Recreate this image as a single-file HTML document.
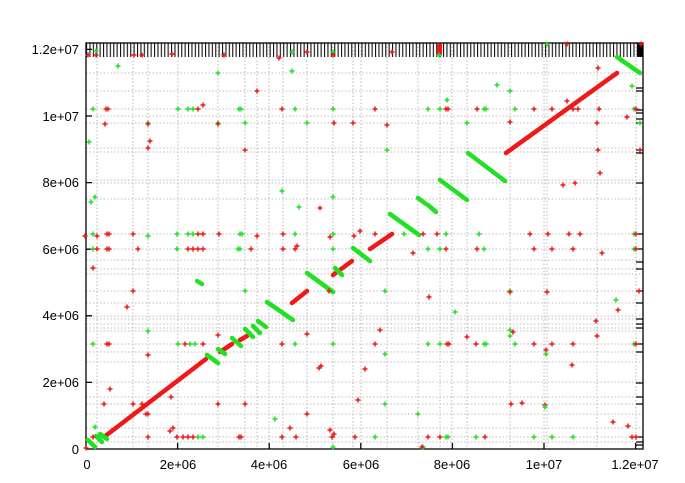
<!DOCTYPE html>
<html><head><meta charset="utf-8"><style>
html,body{margin:0;padding:0;background:#fff;width:685px;height:483px;overflow:hidden}
svg{display:block}
text{font-family:"Liberation Sans",sans-serif;font-size:13px;fill:#000}
</style></head><body>
<svg width="685" height="483" viewBox="0 0 685 483">
<defs>
<pattern id="tk" x="86" y="43" width="3.4" height="20" patternUnits="userSpaceOnUse">
<rect x="0" y="0" width="1.1" height="14" fill="#111"/>
</pattern>
<g id="r"><path d="M-2.5 0H2.5M0 -2.5V2.5" stroke="#f01818" stroke-width="1.5"/></g>
<g id="g"><path d="M-2.5 0H2.5M0 -2.5V2.5" stroke="#22e022" stroke-width="1.5"/></g>
</defs>
<!-- grid -->
<g stroke="#aaa" stroke-width="0.8" stroke-dasharray="1.5,2">
<path d="M97 43V449M133 43V449M148 43V449M178 43V449M218 43V449M245 43V449M257 43V449M269 43V449M283 43V449M307 43V449M333 43V449M353 43V449M361 43V449M387 43V449M418 43V449M440 43V449M452 43V449M467 43V449M510 43V449M544 43V449M547 43V449M597 43V449M636 43V449"/>
<path d="M86 73H643M86 91H643M86 109H643M86 116H643M86 123H643M86 148H643M86 152H643M86 180H643M86 183H643M86 199H643M86 234H643M86 249H643M86 260H643M86 269H643M86 274H643M86 291H643M86 303H643M86 316H643M86 319H643M86 324H643M86 328H643M86 331H643M86 344H643M86 352H643M86 362H643M86 382H643M86 397H643M86 404H643M86 414H643M86 428H643M86 437H643M86 442H643"/>
</g>
<!-- top dense ticks -->
<rect x="86" y="43" width="557" height="14" fill="url(#tk)"/>
<rect x="637" y="43" width="6" height="14" fill="#000"/>
<rect x="437" y="44" width="5" height="11" fill="#f01818"/>
<!-- right ticks -->
<g stroke="#000" stroke-width="1.3">
<path d="M636 88H643M636 91H643M636 110H643M636 113H643M636 119H643M636 123H643M636 150H643M636 153H643M636 183H643M636 234H643M636 249H643M636 262H643M636 269H643M636 291H643M636 303H643M636 319H643M636 324H643M636 328H643M636 344H643M636 352H643M636 383H643M636 397H643M636 404H643M636 437H643M636 442H643M636 445H643"/>
</g>
<!-- frame -->
<rect x="86" y="43" width="557" height="406" fill="none" stroke="#000" stroke-width="1.3"/>
<g stroke="#000" stroke-width="1.3">
<path d="M86 49.4h6M86 116h6M86 182.6h6M86 249.2h6M86 315.8h6M86 382.4h6M177.6 449v-6M269.2 449v-6M360.8 449v-6M452.4 449v-6M544 449v-6M635.6 449v-6"/>
</g>
<!-- labels -->
<g text-anchor="end">
<text x="79" y="54">1.2e+07</text>
<text x="79" y="121">1e+07</text>
<text x="79" y="187">8e+06</text>
<text x="79" y="254">6e+06</text>
<text x="79" y="320">4e+06</text>
<text x="79" y="387">2e+06</text>
<text x="79" y="454">0</text>
</g>
<g text-anchor="middle">
<text x="87" y="469">0</text>
<text x="178" y="469">2e+06</text>
<text x="269" y="469">4e+06</text>
<text x="361" y="469">6e+06</text>
<text x="452" y="469">8e+06</text>
<text x="544" y="469">1e+07</text>
<text x="635" y="469">1.2e+07</text>
</g>
<!-- main segments -->
<g stroke-width="4.5" stroke-linecap="round" fill="none">
<g stroke="#f01818">
<path d="M104 437L206 359"/>
<path d="M220 352L232 344"/>
<path d="M240 340L247 336"/>
<path d="M292 303L307 291"/>
<path d="M333 275L352 261"/>
<path d="M370 249L392 234"/>
<path d="M506 153L617 73"/>
</g>
<g stroke="#22e022">
<path d="M88 440L95 447"/><path d="M96 436L102 442"/><path d="M100 434L107 439"/>
<path d="M207 355L218 363"/>
<path d="M218 349L225 354"/>
<path d="M232 338L241 346"/>
<path d="M245 329L253 337"/>
<path d="M253 326L260 333"/>
<path d="M258 321L266 327"/>
<path d="M267 302L293 320"/>
<path d="M307 273L333 292"/>
<path d="M335 268L342 275"/>
<path d="M353 248L370 261"/>
<path d="M390 214L419 235"/>
<path d="M418 198L426 204"/><path d="M428 205L436 212"/>
<path d="M440 180L467 200"/>
<path d="M468 153L505 181"/>
<path d="M617 57L640 73"/>
<path d="M197 281L202 284"/>
</g>
</g>
<!-- crosses -->
<g>
<use href="#r" x="88" y="55"/><use href="#r" x="96" y="55"/><use href="#g" x="96" y="51"/><use href="#r" x="134" y="55"/><use href="#r" x="142" y="55"/><use href="#r" x="172" y="54"/><use href="#r" x="224" y="55"/><use href="#r" x="279" y="58"/><use href="#g" x="292" y="52"/><use href="#r" x="307" y="52"/><use href="#g" x="333" y="52"/><use href="#r" x="333" y="55"/><use href="#r" x="392" y="52"/><use href="#g" x="439" y="55"/><use href="#g" x="547" y="44"/><use href="#r" x="567" y="44"/><use href="#r" x="641" y="44"/>
<use href="#g" x="118" y="66"/><use href="#g" x="218" y="73"/><use href="#g" x="292" y="71"/><use href="#r" x="257" y="91"/><use href="#g" x="497" y="85"/><use href="#g" x="510" y="91"/><use href="#g" x="632" y="86"/><use href="#r" x="598" y="68"/><use href="#r" x="567" y="101"/><use href="#r" x="627" y="117"/>
<use href="#g" x="93" y="109"/><use href="#r" x="106" y="109"/><use href="#r" x="108" y="109"/><use href="#g" x="178" y="109"/><use href="#g" x="188" y="109"/><use href="#g" x="193" y="109"/><use href="#r" x="198" y="109"/><use href="#r" x="203" y="105"/><use href="#g" x="239" y="109"/><use href="#g" x="241" y="109"/><use href="#r" x="282" y="109"/><use href="#g" x="295" y="109"/><use href="#g" x="333" y="109"/><use href="#r" x="375" y="109"/><use href="#g" x="428" y="109"/><use href="#g" x="440" y="109"/><use href="#r" x="446" y="109"/><use href="#r" x="448" y="109"/><use href="#g" x="447" y="100"/><use href="#r" x="477" y="109"/><use href="#g" x="484" y="109"/><use href="#g" x="486" y="109"/><use href="#g" x="515" y="109"/><use href="#r" x="534" y="109"/><use href="#r" x="552" y="109"/><use href="#r" x="573" y="109"/><use href="#r" x="578" y="109"/><use href="#r" x="599" y="109"/><use href="#g" x="634" y="109"/><use href="#r" x="636" y="109"/>
<use href="#r" x="105" y="124"/><use href="#g" x="148" y="123"/><use href="#r" x="148" y="124"/><use href="#g" x="218" y="123"/><use href="#r" x="218" y="124"/><use href="#g" x="245" y="123"/><use href="#g" x="307" y="123"/><use href="#r" x="334" y="123"/><use href="#r" x="353" y="123"/><use href="#r" x="387" y="125"/><use href="#g" x="467" y="123"/><use href="#r" x="510" y="122"/><use href="#r" x="597" y="123"/><use href="#g" x="640" y="123"/>
<use href="#g" x="89" y="142"/><use href="#r" x="150" y="141"/><use href="#r" x="148" y="148"/><use href="#r" x="245" y="150"/><use href="#g" x="387" y="150"/><use href="#r" x="640" y="150"/><use href="#r" x="598" y="150"/>
<use href="#g" x="91" y="202"/><use href="#g" x="95" y="197"/><use href="#g" x="282" y="191"/><use href="#g" x="299" y="207"/><use href="#r" x="320" y="208"/><use href="#g" x="333" y="197"/><use href="#r" x="575" y="183"/><use href="#r" x="563" y="185"/><use href="#r" x="600" y="173"/>
<use href="#r" x="85" y="236"/><use href="#g" x="93" y="234"/><use href="#r" x="97" y="236"/><use href="#r" x="107" y="234"/><use href="#r" x="109" y="234"/><use href="#r" x="133" y="234"/><use href="#g" x="148" y="236"/><use href="#g" x="177" y="234"/><use href="#g" x="188" y="234"/><use href="#g" x="193" y="234"/><use href="#r" x="198" y="234"/><use href="#r" x="203" y="234"/><use href="#r" x="219" y="234"/><use href="#g" x="240" y="234"/><use href="#g" x="242" y="234"/><use href="#r" x="257" y="236"/><use href="#r" x="283" y="234"/><use href="#g" x="295" y="234"/><use href="#g" x="333" y="234"/><use href="#r" x="330" y="237"/><use href="#r" x="354" y="236"/><use href="#r" x="360" y="231"/><use href="#r" x="375" y="234"/><use href="#g" x="404" y="234"/><use href="#r" x="423" y="234"/><use href="#r" x="437" y="234"/><use href="#g" x="446" y="234"/><use href="#g" x="479" y="234"/><use href="#r" x="530" y="234"/><use href="#r" x="548" y="234"/><use href="#r" x="569" y="234"/><use href="#r" x="580" y="234"/><use href="#g" x="634" y="234"/><use href="#r" x="636" y="234"/>
<use href="#g" x="93" y="249"/><use href="#r" x="97" y="249"/><use href="#r" x="107" y="249"/><use href="#r" x="109" y="249"/><use href="#r" x="138" y="249"/><use href="#g" x="177" y="249"/><use href="#r" x="188" y="249"/><use href="#r" x="193" y="249"/><use href="#r" x="198" y="249"/><use href="#r" x="203" y="249"/><use href="#g" x="238" y="249"/><use href="#g" x="240" y="249"/><use href="#r" x="251" y="249"/><use href="#r" x="283" y="249"/><use href="#r" x="295" y="249"/><use href="#r" x="297" y="246"/><use href="#g" x="333" y="249"/><use href="#g" x="428" y="249"/><use href="#g" x="440" y="249"/><use href="#r" x="446" y="249"/><use href="#r" x="477" y="249"/><use href="#g" x="484" y="249"/><use href="#r" x="534" y="249"/><use href="#r" x="552" y="249"/><use href="#r" x="573" y="249"/><use href="#g" x="634" y="249"/><use href="#r" x="636" y="249"/><use href="#r" x="413" y="253"/><use href="#r" x="602" y="253"/>
<use href="#r" x="93" y="268"/><use href="#r" x="133" y="291"/><use href="#g" x="245" y="291"/><use href="#r" x="329" y="291"/><use href="#g" x="385" y="291"/><use href="#r" x="429" y="297"/><use href="#g" x="455" y="312"/><use href="#g" x="510" y="291"/><use href="#r" x="510" y="292"/><use href="#r" x="547" y="292"/><use href="#r" x="639" y="291"/><use href="#g" x="616" y="300"/><use href="#r" x="618" y="310"/>
<use href="#r" x="127" y="307"/><use href="#g" x="148" y="331"/><use href="#r" x="218" y="335"/><use href="#r" x="148" y="355"/><use href="#r" x="380" y="330"/><use href="#r" x="467" y="337"/><use href="#g" x="510" y="330"/><use href="#g" x="510" y="336"/><use href="#r" x="513" y="332"/><use href="#r" x="596" y="321"/><use href="#r" x="597" y="336"/><use href="#r" x="307" y="334"/>
<use href="#g" x="93" y="344"/><use href="#r" x="107" y="344"/><use href="#r" x="109" y="344"/><use href="#g" x="178" y="344"/><use href="#r" x="185" y="344"/><use href="#g" x="190" y="344"/><use href="#g" x="195" y="344"/><use href="#r" x="203" y="344"/><use href="#r" x="282" y="344"/><use href="#g" x="295" y="344"/><use href="#g" x="333" y="344"/><use href="#r" x="375" y="344"/><use href="#g" x="428" y="344"/><use href="#g" x="440" y="344"/><use href="#r" x="447" y="344"/><use href="#r" x="449" y="344"/><use href="#r" x="476" y="344"/><use href="#g" x="484" y="344"/><use href="#g" x="486" y="344"/><use href="#g" x="515" y="344"/><use href="#r" x="534" y="344"/><use href="#r" x="552" y="344"/><use href="#r" x="573" y="344"/><use href="#g" x="634" y="344"/><use href="#r" x="636" y="344"/>
<use href="#g" x="385" y="354"/><use href="#r" x="546" y="350"/><use href="#g" x="546" y="354"/><use href="#r" x="319" y="368"/><use href="#r" x="321" y="366"/><use href="#r" x="365" y="369"/><use href="#r" x="572" y="365"/>
<use href="#r" x="110" y="389"/><use href="#r" x="104" y="404"/><use href="#r" x="133" y="404"/><use href="#r" x="142" y="404"/><use href="#r" x="146" y="414"/><use href="#r" x="148" y="414"/><use href="#r" x="171" y="397"/><use href="#r" x="218" y="404"/><use href="#r" x="245" y="404"/><use href="#r" x="307" y="414"/><use href="#r" x="290" y="428"/><use href="#r" x="358" y="400"/><use href="#g" x="275" y="419"/><use href="#g" x="385" y="404"/><use href="#r" x="511" y="404"/><use href="#r" x="522" y="403"/><use href="#r" x="545" y="405"/><use href="#g" x="545" y="407"/><use href="#g" x="418" y="414"/><use href="#r" x="613" y="422"/><use href="#r" x="628" y="426"/><use href="#g" x="95" y="427"/><use href="#r" x="170" y="431"/><use href="#r" x="173" y="428"/><use href="#r" x="330" y="430"/>
<use href="#r" x="93" y="437"/><use href="#r" x="148" y="437"/><use href="#r" x="177" y="437"/><use href="#r" x="183" y="437"/><use href="#r" x="188" y="437"/><use href="#r" x="193" y="437"/><use href="#g" x="198" y="437"/><use href="#g" x="203" y="437"/><use href="#r" x="239" y="437"/><use href="#r" x="241" y="437"/><use href="#r" x="282" y="437"/><use href="#r" x="296" y="437"/><use href="#r" x="332" y="437"/><use href="#r" x="334" y="434"/><use href="#r" x="355" y="437"/><use href="#g" x="375" y="437"/><use href="#r" x="428" y="437"/><use href="#r" x="440" y="437"/><use href="#g" x="446" y="437"/><use href="#g" x="448" y="437"/><use href="#g" x="476" y="437"/><use href="#r" x="485" y="437"/><use href="#g" x="534" y="437"/><use href="#g" x="552" y="437"/><use href="#g" x="573" y="437"/><use href="#r" x="632" y="437"/><use href="#r" x="636" y="437"/><use href="#g" x="423" y="447"/><use href="#r" x="422" y="447"/><use href="#g" x="333" y="447"/><use href="#r" x="86" y="448"/>
</g>
</svg>
</body></html>
